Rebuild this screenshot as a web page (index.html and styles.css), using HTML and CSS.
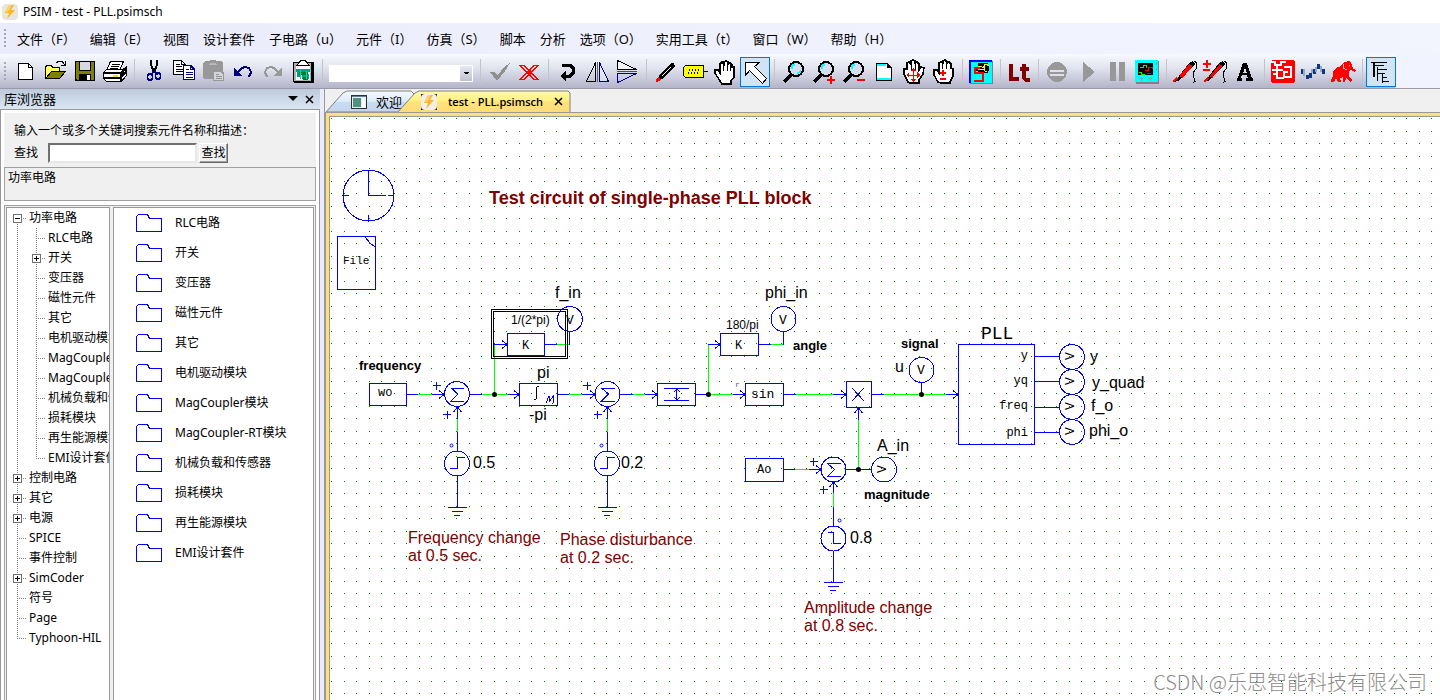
FILE: index.html
```html
<!DOCTYPE html>
<html lang="zh-CN">
<head>
<meta charset="utf-8">
<title>PSIM - test - PLL.psimsch</title>
<link rel="stylesheet" href="styles.css">
</head>
<body>
<div class="app">
  <header class="titlebar">
    <svg class="app-icon" viewBox="0 0 16 16" width="16" height="16" aria-hidden="true"><rect width="16" height="16" rx="4" fill="#e9e6e2"/><path d="M7 1h5L9 6h4L5 15l2-6H3z" fill="#f9b62c"/><path d="M7 1h3L6 8H3z" fill="#ffd36b"/></svg>
    <span>PSIM - test - PLL.psimsch</span>
  </header>

  <nav class="menubar">
    <span class="grip"></span>
    <button>文件（F）</button><button>编辑（E）</button><button>视图</button><button>设计套件</button><button>子电路（u）</button><button>元件（I）</button><button>仿真（S）</button><button>脚本</button><button>分析</button><button>选项（O）</button><button>实用工具（t）</button><button>窗口（W）</button><button>帮助（H）</button>
  </nav>

  <div class="toolrow">
  <div class="toolbar">
    <span class="grip"></span>
    <button class="tool" aria-label="New"><svg viewBox="0 0 30 30"><path d="M8.500 6.500h10l4 4v12h-14z" fill="#fff" stroke="#000"/><path d="M18.500 6.500v4h4" fill="none" stroke="#000"/></svg></button>
    <button class="tool" aria-label="Open"><svg viewBox="0 0 30 30"><path d="M5.500 21.500v-12l2-1h4l1 2h7v4h-8z" fill="#ffff60" stroke="#000"/><path d="M5.500 21.500l6-7h14l-6 7z" fill="#808000" stroke="#000"/><path d="M16 6l3-2h3l2 3v2m-3-1h4v-4" fill="none" stroke="#000"/></svg></button>
    <button class="tool" aria-label="Save"><svg viewBox="0 0 30 30"><rect x="5" y="4" width="20" height="20" fill="#000"/><path d="M6 5h18v18H7l-1-1z" fill="#808000"/><rect x="9" y="5" width="12" height="9" fill="#000"/><rect x="10" y="5" width="10" height="8" fill="#d8d8e4"/><rect x="9" y="17" width="12" height="7" fill="#000"/><rect x="17" y="18" width="3" height="5" fill="#fff"/></svg></button>
    <button class="tool" aria-label="Print"><svg viewBox="0 0 30 30"><path d="M10.500 4.500h13l-4 9h-13z" fill="#fff" stroke="#000"/><path d="M12 7h8M11 9h8M10 11h8" stroke="#000"/><path d="M3.500 15.500l3-3h17l3-3v9l-5 6h-15l-3-3z" fill="#fff" stroke="#000"/><path d="M4 16h17l4-5M4 21h18M21 16v8M23 14l3-2v3l-3 3z" stroke="#000" stroke-width="2" fill="none"/><path d="M13 19h5" stroke="#ffe000" stroke-width="2"/></svg></button>
    <i class="sep"></i>
    <button class="tool" aria-label="Cut"><svg viewBox="0 0 30 30"><path d="M13 3v5l3 7M19 3v5l-3 7" stroke="#000" stroke-width="2" fill="none"/><path d="M16 14l-3 4M16 14l3 4" stroke="#000080" stroke-width="2"/><ellipse cx="12" cy="20" rx="2.500" ry="3.500" fill="none" stroke="#000080" stroke-width="1.500"/><ellipse cx="20" cy="19" rx="2.500" ry="3.500" fill="none" stroke="#000080" stroke-width="1.500"/></svg></button>
    <button class="tool" aria-label="Copy"><svg viewBox="0 0 30 30"><path d="M5.500 3.500h8l4 4v10h-12z" fill="#fff" stroke="#000"/><path d="M13.500 3.500v4h4M8 7h4M8 9h6M8 12h7M8 14h7" fill="none" stroke="#000"/><path d="M15.500 8.500h7l4 4v10h-11z" fill="#fff" stroke="#000080" stroke-width="1.500"/><path d="M22.500 8.500v4h4M18 12h3M18 15h7M18 17h7M18 20h7" fill="none" stroke="#000080"/></svg></button>
    <button class="tool" aria-label="Paste"><svg viewBox="0 0 30 30"><path d="M5 6l2-2h4l2-1h4l2 1h4l2 2v9h1v9H15v-2H6l-1-2z" fill="#989898"/><path d="M10 8h9l-1-2h-6z" fill="#b8b8c0"/><path d="M16 15h6l3 3v5h-9z" fill="#d4d4dc"/><path d="M18 17h3M18 19h6M18 21h6" stroke="#909090"/></svg></button>
    <button class="tool" aria-label="Undo"><svg viewBox="0 0 30 30"><path d="M6 10v9h8z" fill="#000080"/><path d="M10 15l4-4 3-1 4 1 2 4-1 3-2 2" fill="none" stroke="#000080" stroke-width="2"/></svg></button>
    <button class="tool" aria-label="Redo"><svg viewBox="0 0 30 30"><path d="M24 10v9h-8z" fill="#989898"/><path d="M20 15l-4-4-3-1-4 1-2 4 1 3 2 2" fill="none" stroke="#989898" stroke-width="2"/></svg></button>
    <button class="tool" aria-label="Copy image"><svg viewBox="0 0 30 30"><rect x="6" y="5" width="20" height="21" fill="#000"/><rect x="5.500" y="5.500" width="18" height="19" fill="#b0b0b0" stroke="#000"/><rect x="8" y="9" width="14" height="14" fill="#fff"/><path d="M9 8l2-2 2-3h4l2 3 2 2z" fill="#fff" stroke="#000"/><path d="M8 12h14v3H8zM9 15h3v5H9zM14 17h7v5h-7z" fill="#00a088"/><path d="M11 15h9v3h-9zM15 20h5v3h-5z" fill="#008020"/><path d="M12 13v9M18 14v8" stroke="#00d8d8"/></svg></button>
    <i class="sep"></i>
    <select class="combo" aria-label="Element"><option></option></select>
    <i class="sep"></i>
    <button class="tool" aria-label="Apply"><svg viewBox="0 0 30 30"><path d="M6 15l4 0 4 3 6-8 6-4-5 8-7 9h-2z" fill="#909090"/></svg></button>
    <button class="tool" aria-label="Cancel"><svg viewBox="0 0 30 30"><path d="M6 8.500h4l14 14h-4zM20 8.500h4l-14 14H6z" fill="none" stroke="#f00"/><path d="M13 14l2-2 2 2 1 2-2 2h-2l-2-2z" fill="#f00"/></svg></button>
    <i class="sep"></i>
    <button class="tool" aria-label="Rotate"><svg viewBox="0 0 30 30"><path d="M10 9l4-1h4l3 3v5l-3 3h-5" fill="none" stroke="#000" stroke-width="3"/><path d="M8 19l6-6v11z" fill="#000"/></svg></button>
    <button class="tool" aria-label="Flip horizontally"><svg viewBox="0 0 30 30"><path d="M13.500 5.500v19h-9z" fill="none" stroke="#000"/><path d="M17.500 5.500v19h9z" fill="#fff" fill-opacity=".4" stroke="#000080"/><path d="M15.500 5v20" stroke="#606060"/></svg></button>
    <button class="tool" aria-label="Flip vertically"><svg viewBox="0 0 30 30"><path d="M5.500 3.500v9h19z" fill="#fff" fill-opacity=".6" stroke="#000"/><path d="M5.500 25.500v-9h19z" fill="none" stroke="#000080"/><path d="M5 14.500h20" stroke="#505050"/></svg></button>
    <i class="sep"></i>
    <button class="tool" aria-label="Wire"><svg viewBox="0 0 30 30"><path d="M9 19L21 6l3 0 1 3-13 13-4 1z" fill="#000"/><path d="M12 19l9-9" stroke="#fff"/><path d="M6 25v-3l2-2 3 3-2 1z" fill="#f00"/></svg></button>
    <button class="tool" aria-label="Label"><svg viewBox="0 0 30 30"><path d="M5.500 8.500h18v12h-18l-2-2v-8z" fill="#ff0" stroke="#000"/><path d="M24 14.500h4" stroke="#000"/><path d="M9 13h1m2 0h1m2 0h1m2 0h1M8 16h1m2 0h1m2 0h1m2 0h1" stroke="#000" stroke-width="2"/></svg></button>
    <button class="tool" aria-label="Pan"><svg viewBox="0 0 30 30"><path d="M10 24l-5-8v-3h3l2 3V7l2-2 2 2V5l2-1 2 1v2l2-1 2 2v2l2 0 0 3v7l-3 4v3h-9z" fill="#fff" stroke="#000" stroke-width="1.500"/><path d="M13.500 7v7M17.500 6v8M20.500 8v6" stroke="#000"/></svg></button>
    <button class="tool selected" aria-label="Select" aria-pressed="true"><svg viewBox="0 0 30 30"><path d="M5.500 5.500h14l-5 4 12 12-4 5-13-13-4 5z" fill="#fff" stroke="#000"/></svg></button>
    <i class="sep"></i>
    <button class="tool" aria-label="Zoom"><svg viewBox="0 0 30 30"><path d="M6 25l9-9" stroke="#000" stroke-width="4"/><circle cx="18" cy="12" r="7" fill="#d8dcec" stroke="#000" stroke-width="2"/><path d="M14 12v-3l3-2M19 17l4-3" stroke="#0ff" stroke-width="2" fill="none"/></svg></button>
    <button class="tool" aria-label="Zoom in"><svg viewBox="0 0 30 30"><path d="M6 25l9-9" stroke="#000" stroke-width="4"/><circle cx="18" cy="12" r="7" fill="#d8dcec" stroke="#000" stroke-width="2"/><path d="M14 12v-3l3-2" stroke="#0ff" stroke-width="2" fill="none"/><path d="M19 23h8M23 19v8" stroke="#f00" stroke-width="2"/></svg></button>
    <button class="tool" aria-label="Zoom out"><svg viewBox="0 0 30 30"><path d="M6 25l9-9" stroke="#000" stroke-width="4"/><circle cx="18" cy="12" r="7" fill="#d8dcec" stroke="#000" stroke-width="2"/><path d="M14 12v-3l3-2" stroke="#0ff" stroke-width="2" fill="none"/><path d="M19 23h8" stroke="#f00" stroke-width="2"/></svg></button>
    <button class="tool" aria-label="Fit page"><svg viewBox="0 0 30 30"><path d="M8.500 6.500h11l4 4v13h-15z" fill="#fff" stroke="#000"/><path d="M19 6v5h5z" fill="#000"/><path d="M9 8h9M9 22h14" stroke="#0ff" stroke-width="2"/></svg></button>
    <button class="tool" aria-label="Pan view"><svg viewBox="0 0 30 30"><path d="M10 25l-4-8v-5h3V6l2-1 2 2V4l2-1 2 1v2l2-1 2 2v6l2-3 3 1-1 6-4 6v3h-9z" fill="#fff" stroke="#000" stroke-width="1.500"/><path d="M13.500 7v6M17.500 6v7" stroke="#000"/><path d="M9 18h12M15 12v12" stroke="#f00"/><path d="M12 14l3-3 3 3zM12 22l3 3 3-3zM11 15l-3 3 3 3zM19 15l3 3-3 3z" fill="#f00"/></svg></button>
    <button class="tool" aria-label="Hand zoom"><svg viewBox="0 0 30 30"><path d="M10 25l-4-7v-5h3l2 3V6l2-1 2 1V4l2-1 2 2v1l2-1 2 2v4l2 1v7l-3 6v1h-9z" fill="#fff" stroke="#000" stroke-width="1.500"/><path d="M14.500 6v6M18.500 6v6" stroke="#000"/><path d="M12 16h6M15 13v6M12 22h6" stroke="#f00" stroke-width="2"/></svg></button>
    <i class="sep"></i>
    <button class="tool" aria-label="Schematic"><svg viewBox="0 0 30 30"><rect x="4" y="4" width="23" height="23" fill="#808080"/><rect x="3" y="3" width="23" height="23" fill="#0ff"/><path d="M4 26V4h22" stroke="#00f" stroke-width="2" fill="none"/><path d="M12 6h10v3h1v5h-1v2H12v-2h-2v-2h2z" fill="#000"/><path d="M12 9h3l2 2 3-4 3 2M12 13l4-1 5 3M18 7v7" stroke="#ff0" fill="none"/><path d="M14 11H9v5h8v8H8" stroke="#f00" stroke-width="2" fill="none"/></svg></button>
    <i class="sep"></i>
    <button class="tool" aria-label="Lt"><svg viewBox="0 0 30 30"><path d="M7 7v15h8M20 7v14l2 2h4M16 12h9" fill="none" stroke="#800000" stroke-width="3.500"/></svg></button>
    <i class="sep"></i>
    <button class="tool" aria-label="Stop"><svg viewBox="0 0 30 30"><circle cx="15" cy="15" r="10" fill="#989898"/><path d="M8 14h14M8 18h14" stroke="#e0e0ec" stroke-width="1.500"/></svg></button>
    <button class="tool" aria-label="Run"><svg viewBox="0 0 30 30"><path d="M11 5l12 10-12 10z" fill="#989898"/></svg></button>
    <button class="tool" aria-label="Pause"><svg viewBox="0 0 30 30"><path d="M8 5h6v19H8zM17 5h6v19h-6z" fill="#989898"/></svg></button>
    <button class="tool" aria-label="Scope"><svg viewBox="0 0 30 30"><rect x="4" y="4" width="23" height="23" fill="#808080"/><rect x="3" y="3" width="23" height="22" fill="#0ff"/><rect x="6" y="6" width="15" height="12" fill="#000"/><path d="M8 10h3v-2h3v3M7 15h2v2h4" stroke="#0f0" fill="none"/><path d="M13 13h3v-3h4v2M15 16h4" stroke="#f00" fill="none"/><path d="M7 21h4M9 21v3M16 21h4M18 21v3M24 5v3M24 11v2" stroke="#60b0b0"/></svg></button>
    <i class="sep"></i>
    <button class="tool" aria-label="Probe"><svg viewBox="0 0 30 30"><path d="M6 23L19 6l4-2 2 3-15 16-5 2z" fill="#000"/><path d="M11 20L21 8" stroke="#f00" stroke-width="4"/><path d="M3 25l4-4" stroke="#f00" stroke-width="2"/><path d="M24 4l3 2-1 6-3 4v4l2 2-1 3 2-1" fill="none" stroke="#000"/></svg></button>
    <button class="tool" aria-label="Differential probe"><svg viewBox="0 0 30 30"><path d="M6 23L19 6l4-2 2 3-15 16-5 2z" fill="#000"/><path d="M11 20L21 8" stroke="#f00" stroke-width="3"/><path d="M4 25l4-4M3 7h8M7 3v8M3 13h7" stroke="#f00" stroke-width="2"/><path d="M24 4l3 2-1 6-3 4v4l2 2-1 3 2-1" fill="none" stroke="#000"/></svg></button>
    <button class="tool" aria-label="Text"><svg viewBox="0 0 30 30"><path fill-rule="evenodd" d="M13 6h4l5 15h1v3h-7v-3h2l-1-3h-5l-1 3h1v3H7v-3h1zM15 11l-2 5h4z" fill="#000"/></svg></button>
    <i class="sep"></i>
    <button class="tool" aria-label="Device"><svg viewBox="0 0 30 30"><rect x="3" y="3" width="24" height="23" rx="3" fill="#f00"/><path d="M3 5h4v3h6V5h5M4 13h11M9 9v12h7M5 17h4" fill="none" stroke="#fff" stroke-width="2"/><path d="M16 9.500h7v10h-7v-5h4" fill="none" stroke="#fff" stroke-width="2"/></svg></button>
    <button class="tool" aria-label="Waveform"><svg viewBox="0 0 30 30"><path d="M3 12h3v5H3zM8 18h3v4H8zM11 16h3v5h-3zM15 12h3v5h-3zM19 7h3v5h-3zM24 12h3v5h-3z" fill="#103878"/><path d="M6 12v7M14 12v4M18 10v5M23 9v6" stroke="#90a8c8" stroke-width="2"/></svg></button>
    <button class="tool" aria-label="SimCoder"><svg viewBox="0 0 30 30"><path d="M3 23l2-4v-4l3-4 5-2 3-4 6-1 2 4 1 4 3 1-1 2-4-2-2 1v5l3 4-2 2-4-4-1 4-2 0v-5l-3 1 1 4-3 0-2-4-2 4-3 0z" fill="#f00"/><path d="M15 7v4l4 2M21 8h1" stroke="#ffc0c0" fill="none"/></svg></button>
    <i class="sep"></i>
    <button class="tool selected" aria-label="Library browser" aria-pressed="true"><svg viewBox="0 0 30 30"><path d="M5 5.500h16M7 5v15M8 8.500h10M11 10v14M11 12.500h10M12 16.500h7M16 17v9M16 20.500h5M17 24.500h6" stroke="#000" fill="none"/><path d="M8 5v15" stroke="#000"/></svg></button>
  </div>
  </div>

  <div class="workspace">
    <aside class="library">
      <div class="lib-head"><span>库浏览器</span>
        <button aria-label="Menu"><svg width="10" height="6" viewBox="0 0 10 6"><path d="M0 0h10L5 5z"/></svg></button>
        <button aria-label="Close"><svg width="9" height="9" viewBox="0 0 9 9"><path d="M1 1l7 7M8 1L1 8" stroke="#000" stroke-width="1.500"/></svg></button>
      </div>
      <div class="lib-body">
        <form class="search">
          <label for="q">输入一个或多个关键词搜索元件名称和描述：</label>
          <div class="search-row"><span>查找</span><input id="q" type="text"><button type="button">查找</button></div>
        </form>
        <div class="path">功率电路</div>
        <div class="panes">
          <div class="pane tree-pane">
            <ul class="tree">
              <li><div class="row"><button class="toggle" aria-label="Collapse"></button>功率电路</div>
                <ul>
                  <li><div class="row">RLC电路</div></li>
                  <li><div class="row"><button class="toggle plus" aria-label="Expand"></button>开关</div></li>
                  <li><div class="row">变压器</div></li>
                  <li><div class="row">磁性元件</div></li>
                  <li><div class="row">其它</div></li>
                  <li><div class="row">电机驱动模块</div></li>
                  <li><div class="row">MagCoupler模块</div></li>
                  <li><div class="row">MagCoupler-RT模块</div></li>
                  <li><div class="row">机械负载和传感器</div></li>
                  <li><div class="row">损耗模块</div></li>
                  <li><div class="row">再生能源模块</div></li>
                  <li><div class="row">EMI设计套件</div></li>
                </ul>
              </li>
              <li><div class="row"><button class="toggle plus" aria-label="Expand"></button>控制电路</div></li>
              <li><div class="row"><button class="toggle plus" aria-label="Expand"></button>其它</div></li>
              <li><div class="row"><button class="toggle plus" aria-label="Expand"></button>电源</div></li>
              <li><div class="row">SPICE</div></li>
              <li><div class="row">事件控制</div></li>
              <li><div class="row"><button class="toggle plus" aria-label="Expand"></button>SimCoder</div></li>
              <li><div class="row">符号</div></li>
              <li><div class="row">Page</div></li>
              <li><div class="row">Typhoon-HIL</div></li>
            </ul>
          </div>
          <div class="pane list-pane">
            <svg width="0" height="0" class="defs"><symbol id="folder" viewBox="0 0 27 20"><path d="M1.500 18.500V3.500l2-2h9l2 4h11.500v13z" fill="#fff" stroke="#00f"/></symbol></svg>
            <ul class="list">
              <li><svg><use href="#folder"/></svg>RLC电路</li>
              <li><svg><use href="#folder"/></svg>开关</li>
              <li><svg><use href="#folder"/></svg>变压器</li>
              <li><svg><use href="#folder"/></svg>磁性元件</li>
              <li><svg><use href="#folder"/></svg>其它</li>
              <li><svg><use href="#folder"/></svg>电机驱动模块</li>
              <li><svg><use href="#folder"/></svg>MagCoupler模块</li>
              <li><svg><use href="#folder"/></svg>MagCoupler-RT模块</li>
              <li><svg><use href="#folder"/></svg>机械负载和传感器</li>
              <li><svg><use href="#folder"/></svg>损耗模块</li>
              <li><svg><use href="#folder"/></svg>再生能源模块</li>
              <li><svg><use href="#folder"/></svg>EMI设计套件</li>
            </ul>
          </div>
        </div>
      </div>
    </aside>

    <main class="document">
      <div class="tabs">
        <button class="tab">
          <svg class="tab-shape" width="100" height="23" viewBox="0 0 100 23"><defs><linearGradient id="tg" x2="0" y2="1"><stop offset="0" stop-color="#f4fbff"/><stop offset=".5" stop-color="#dcebfa"/><stop offset=".5" stop-color="#c8dcf4"/><stop offset="1" stop-color="#c4d4f0"/></linearGradient></defs><path d="M1 23L18 4l4-2h64l3 3v18z" fill="url(#tg)" stroke="#808080"/></svg>
          <svg class="tab-icon" width="16" height="14" viewBox="0 0 16 14"><rect x=".5" y=".5" width="15" height="13" fill="#e8f0f0" stroke="#303030"/><rect x="2" y="3" width="8" height="9" fill="#4f9080"/><rect x="11" y="3" width="3" height="9" fill="#fff"/><path d="M1 1.500h14" stroke="#6080a0"/></svg>
          <span>欢迎</span>
        </button>
        <button class="tab active">
          <svg class="tab-shape" width="174" height="23" viewBox="0 0 174 23"><defs><linearGradient id="ta" x2="0" y2="1"><stop offset="0" stop-color="#fff8b0"/><stop offset=".45" stop-color="#fff07c"/><stop offset=".5" stop-color="#ffe27c"/><stop offset="1" stop-color="#ffdc78"/></linearGradient></defs><path d="M0 24L18 4l4-2h149l2 2v20z" fill="url(#ta)" stroke="#808080"/></svg>
          <svg class="tab-icon" viewBox="0 0 16 16" width="16" height="16"><rect width="16" height="16" fill="#202020"/><rect width="16" height="16" rx="4" fill="#f4eee4"/><path d="M7 1h5L9 6h4L5 15l2-6H3z" fill="#f9b62c"/><path d="M7 1h3L6 8H3z" fill="#ffd36b"/></svg>
          <b>test - PLL.psimsch</b>
          <svg class="tab-close" width="9" height="9" viewBox="0 0 9 9"><path d="M1 1l7 7M8 1L1 8" stroke="#000" stroke-width="1.500"/></svg>
        </button>
      </div>
      <div class="canvas">
        <svg class="sheet" width="100%" height="100%">
          <defs>
            <pattern id="grid" width="25" height="25" patternUnits="userSpaceOnUse"><path d="M1 1h1v1h-1zM14 1h1v1h-1zM1 14h1v1h-1zM14 14h1v1h-1z" fill="#008000"/></pattern>
            <g id="sum"><circle r="12.500"/><path d="M7-6H-6L1 0L-6 7H7"/></g>
            <g id="plus"><path d="M-4 0h8M0-4v8"/></g>
            <g id="ar"><path d="M-5-4L0 0L-5 4"/></g>
            <g id="au"><path d="M-4 5L0 0L4 5"/></g>
            <g id="gnd"><path d="M-9 0h19M-5 4h11M-3 8h6"/></g>
          </defs>
          <rect width="100%" height="100%" fill="url(#grid)"/>
          <g transform="translate(-330 -117)">
            <g class="wire live"><path d="M418 394.500h14M482 394.500h26M494.500 394V344M457.500 419v13M557 344.500h12M569 394.500h13M607.500 419v13M633 394.500h12M708.500 394V344M708 394.500h25M771 344.500h12M796 394.500h37M858.500 420v49M795 469.500h14M833.500 493v14M884 394.500h62"/></g>
            <g class="wire">
              <circle cx="368.500" cy="195.500" r="25.500"/><path d="M368.500 170v25.500H386M343 195.500h6M388 195.500h6M368.500 215v6"/>
              <path d="M337.500 236.500h38v53h-38zM365 237l5 6 5 4"/>
              <path d="M369.500 383.500h37v22h-37zM407 394.500h11M432 394.500h12M470 394.500h12M508 394.500h11M519.500 383.500h38v22h-38z"/>
              <path d="M494 344.500h13M507.500 333.500h37v22h-37zM545 344.500h12M569.500 345v-13"/>
              <path d="M546 403l3-7v6l5-7-1 8 1-1"/>
              <path d="M557 394.500h12M582 394.500h13M620 394.500h13M645 394.500h12M657.500 383.500h38v22h-38zM664 388.500h25M664 400.500h25M676.500 389v11M674 392l3-3 3 3M674 397l3 3 3-3"/>
              <path d="M696 394.500h12M708 344.500h12M720.500 333.500h38v22h-38zM759 344.500h12M783.500 345v-13M733 394.500h12M745.500 383.500h38v22h-38zM784 394.500h12M833 394.500h13"/>
              <path d="M846.500 381.500h25v26h-25zM852 388l12 13M864 388l-12 13M858.500 407v13M872 394.500h12M946 394.500h12M921.500 383v11"/>
              <path d="M745.500 458.500h38v23h-38zM784 469.500h11M809 469.500h12M846 469.500h25"/>
              <path d="M958.500 344.500h76v100h-76zM1035 356.500h25M1035 381.500h25M1035 407.500h25M1035 432.500h25"/>
              <path d="M457.500 407v12M457.500 432v19M457.500 476v31M607.500 407v12M607.500 432v19M607.500 476v31M833.500 482v11M833.500 507v19M833.500 551v31"/>
              <path d="M450 468.500h7.500v-11h7M600 468.500h7.500v-11h7M828 532.500h5.500v11h7"/>
              <circle cx="457" cy="463.500" r="12.500"/><circle cx="607" cy="463.500" r="12.500"/><circle cx="833.500" cy="538.500" r="12.500"/>
              <g class="marks"><circle cx="451.500" cy="445.500" r="1.500"/><circle cx="601.500" cy="445.500" r="1.500"/><circle cx="839.500" cy="520.500" r="1.500"/></g>
              <circle cx="570" cy="319" r="12.500"/><circle cx="783.500" cy="319" r="12.500"/><circle cx="921.500" cy="370" r="12.500"/><circle cx="884" cy="469.500" r="12.500"/>
              <circle cx="1072" cy="357" r="12.500"/><circle cx="1072" cy="382" r="12.500"/><circle cx="1072" cy="407" r="12.500"/><circle cx="1072" cy="432" r="12.500"/>
              <use href="#sum" x="457" y="394"/><use href="#sum" x="607.500" y="394"/><use href="#sum" x="833.500" y="469.500"/>
              <use href="#plus" x="436.500" y="385.500"/><use href="#plus" x="447" y="414.500"/><use href="#plus" x="587" y="385.500"/><use href="#plus" x="597.500" y="414.500"/><use href="#plus" x="813.500" y="461.500"/><use href="#plus" x="823.500" y="489.500"/>
              <use href="#ar" x="444" y="394.500"/><use href="#ar" x="519" y="394.500"/><use href="#ar" x="507" y="344.500"/><use href="#ar" x="595" y="394.500"/><use href="#ar" x="657" y="394.500"/><use href="#ar" x="720" y="344.500"/><use href="#ar" x="745" y="394.500"/><use href="#ar" x="846" y="394.500"/><use href="#ar" x="821" y="469.500"/><use href="#ar" x="958" y="394.500"/>
              <use href="#au" x="457.500" y="407"/><use href="#au" x="607.500" y="407"/><use href="#au" x="833.500" y="482"/><use href="#au" x="858.500" y="408"/>
              <use href="#gnd" x="457" y="507.500"/><use href="#gnd" x="607" y="507.500"/><use href="#gnd" x="833" y="582.500"/>
            </g>
            <g class="frame"><path d="M491.500 309.500h76v49h-76zM493.500 311.500h72v45h-72z"/></g>
            <g class="node"><circle cx="494.500" cy="394.500" r="2.500"/><circle cx="708.500" cy="394.500" r="2.500"/><circle cx="858.500" cy="469.500" r="2.500"/><circle cx="921.500" cy="394.500" r="2.500"/></g>
            <path d="M534 400l2-1v-11l2-2 1 1" class="frame"/>
            <g class="t-code">
              <text x="343" y="264" class="c11">File</text><text x="378" y="396">wo</text><text x="522" y="349">K</text><text x="735" y="349">K</text><text x="751" y="398" class="c13">sin</text><text x="757" y="473">Ao</text>
              <text x="735" y="387" class="c8">r</text>
              <text x="566" y="324" class="c13">V</text><text x="779" y="324" class="c13">V</text><text x="917" y="374" class="c13">V</text>
              <text transform="translate(877 473) rotate(-90)" x="0" y="9" class="c13">V</text>
              <text transform="translate(1065 360) rotate(-90)" x="0" y="9" class="c13">V</text><text transform="translate(1065 385) rotate(-90)" x="0" y="9" class="c13">V</text><text transform="translate(1065 410) rotate(-90)" x="0" y="9" class="c13">V</text><text transform="translate(1065 435) rotate(-90)" x="0" y="9" class="c13">V</text>
              <text x="1028" y="359" class="end">y</text><text x="1028" y="384" class="end">yq</text><text x="1028" y="409" class="end">freq</text><text x="1028" y="436" class="end">phi</text>
              <text x="981" y="339" class="c18">PLL</text>
            </g>
            <g class="t-label">
              <text x="555" y="298">f_in</text><text x="765" y="298">phi_in</text><text x="537" y="378">pi</text><text x="529" y="420">-pi</text>
              <text x="473" y="468">0.5</text><text x="621" y="468">0.2</text><text x="850" y="543">0.8</text><text x="895" y="372">u</text><text x="877" y="451">A_in</text>
              <text x="1090" y="362">y</text><text x="1092" y="388">y_quad</text><text x="1091" y="411">f_o</text><text x="1089" y="436">phi_o</text>
              <text x="511" y="324" class="s12">1/(2*pi)</text><text x="726" y="329" class="s12">180/pi</text>
            </g>
            <g class="t-bold"><text x="359" y="370">frequency</text><text x="793" y="350">angle</text><text x="901" y="348">signal</text><text x="864" y="499">magnitude</text></g>
            <g class="t-note">
              <text x="489" y="204" class="heading">Test circuit of single-phase PLL block</text>
              <text x="408" y="543">Frequency change</text><text x="408" y="561">at 0.5 sec.</text>
              <text x="560" y="545">Phase disturbance</text><text x="560" y="563">at 0.2 sec.</text>
              <text x="804" y="613">Amplitude change</text><text x="804" y="631">at 0.8 sec.</text>
            </g>
          </g>
        </svg>
        <div class="watermark">CSDN @乐思智能科技有限公司</div>
      </div>
    </main>
  </div>
</div>
</body>
</html>
```
FILE: styles.css
```css
* { box-sizing: border-box; }
body {
  margin: 0;
  font: 12px/16px "Noto Sans", "Noto Sans CJK SC", sans-serif;
  color: #000;
  overflow: hidden;
}
button {
  font: inherit;
  color: inherit;
  background: none;
  border: 0;
  padding: 0;
}
ul { list-style: none; margin: 0; padding: 0; }

.app { display: flex; flex-direction: column; height: 100vh; background: #ebecfb; }

.titlebar {
  display: flex;
  align-items: center;
  gap: 5px;
  height: 23px;
  padding-left: 2px;
  background: #fff;
}

.menubar {
  display: flex;
  align-items: center;
  gap: 14px;
  height: 31px;
  background: linear-gradient(90deg, #ebecfb, #f2f5fe);
  font-size: 13px;
  white-space: nowrap;
}
.grip {
  flex: none;
  width: 2px;
  height: 20px;
  margin: 0 4px;
  background: repeating-linear-gradient(#a8a8b4 0 2px, transparent 2px 4px);
}
.menubar .grip { margin: 0 -3px 0 4px; }

.toolrow { display: flex; background: #f1f4fe; border-bottom: 1px solid #9a9aa8; }
.toolbar {
  display: flex;
  align-items: center;
  height: 34px;
  padding-top: 2px;
  background: linear-gradient(#f8faff, #e2e4ef 40%, #b4b4ca);
  border-radius: 0 0 2px 0;
}
.tool { width: 30px; height: 30px; flex: none; }
.tool svg { display: block; width: 30px; height: 30px; shape-rendering: crispEdges; }
.selected { background: #d0e4f5; box-shadow: inset 0 0 0 1px #0078d7; }
.sep { flex: none; width: 8px; height: 26px; background: linear-gradient(#c4c4c8, #c4c4c8) 4px 0 / 1px 100% no-repeat; }
.combo {
  appearance: none;
  width: 144px;
  height: 17px;
  margin: 2px 3px 0;
  border: 1px solid #fff;
  border-radius: 0;
  background:
    linear-gradient(45deg, transparent 50%, #000 50%) 134px 6px / 3px 3px no-repeat,
    linear-gradient(-45deg, transparent 50%, #000 50%) 137px 6px / 3px 3px no-repeat,
    linear-gradient(#e8e8f2, #c0c0d0) 100% 0 / 12px 100% no-repeat,
    #fff;
}

.workspace { display: flex; flex: 1; gap: 4px; min-height: 0; }

.library { display: flex; flex-direction: column; width: 320px; flex: none; }
.lib-head {
  display: flex;
  align-items: center;
  gap: 7px;
  height: 20px;
  padding: 0 6px 0 4px;
  background: linear-gradient(#bccadb, #dae6f2);
  font-size: 13px;
}
.lib-head span { flex: 1; }
.lib-head button { display: flex; }
.lib-body {
  display: flex;
  flex-direction: column;
  flex: 1;
  min-height: 0;
  padding: 3px 3px 0;
  border: solid #989898;
  border-width: 1px 1px 0;
  background: #fff;
}
.search { padding: 10px 10px 3px; background: #f0f0f0; }
.search label { display: block; white-space: nowrap; }
.search-row { display: flex; align-items: center; margin-top: 3px; height: 22px; }
.search-row input {
  width: 149px;
  height: 20px;
  margin: 0 2px 0 10px;
  padding: 0 2px;
  font: inherit;
  background: #fff;
  border: 2px solid;
  border-color: #707070 #e8e8e8 #e8e8e8 #707070;
}
.search-row button {
  width: 29px;
  height: 20px;
  border: 1px solid;
  border-color: #fff #696969 #696969 #fff;
  box-shadow: inset -1px -1px #a0a0a0;
}
.path {
  height: 34px;
  padding: 2px 3px;
  border: 1px solid #a0a0a0;
  background: #f0f0f0;
}
.panes {
  display: flex;
  gap: 3px;
  flex: 1;
  min-height: 0;
  margin-top: 4px;
  padding: 1px 1px 0;
  border: solid #a0a0a0;
  border-width: 1px 1px 0;
  background: #f0f0f0;
}
.pane { overflow: hidden; border: solid #989898; border-width: 1px 1px 0; background: #fff; }
.tree-pane { width: 104px; flex: none; }
.list-pane { flex: 1; }

.tree, .tree ul {
  background: repeating-linear-gradient(#808080 0 1px, transparent 1px 2px) 10px 10px / 1px calc(100% - 20px) no-repeat;
}
.tree ul { margin-left: 19px; background-position: 10px 0; background-size: 1px calc(100% - 10px); }
.row {
  position: relative;
  height: 20px;
  padding-left: 22px;
  line-height: 20px;
  white-space: nowrap;
  background: repeating-linear-gradient(90deg, #808080 0 1px, transparent 1px 2px) 10px 10px / 9px 1px no-repeat;
}
.toggle {
  position: absolute;
  left: 6px;
  top: 6px;
  width: 9px;
  height: 9px;
  border: 1px solid #707070;
  background: linear-gradient(#000, #000) center / 5px 1px no-repeat, #fff;
}
.plus {
  background: linear-gradient(#000, #000) center / 5px 1px no-repeat, linear-gradient(#000, #000) center / 1px 5px no-repeat, #fff;
}
.defs { position: absolute; }
.list li { display: flex; align-items: center; gap: 13px; height: 30px; padding-left: 21px; white-space: nowrap; }
.list svg { width: 27px; height: 20px; shape-rendering: crispEdges; }

.document {
  display: flex;
  flex-direction: column;
  flex: 1;
  min-width: 0;
  background: #f0f0f0;
  border-left: 1px solid #989898;
}
.tabs { display: flex; height: 23px; }
.tab {
  position: relative;
  display: flex;
  align-items: center;
  width: 72px;
  padding: 2px 0 0 26px;
  gap: 9px;
  font-size: 13px;
  text-align: left;
}
.tab span { white-space: nowrap; }
.tab > * { position: relative; flex: none; }
.tab > .tab-shape { position: absolute; left: 0; top: 0; }
.tab.active { width: 174px; padding-left: 24px; gap: 11px; font-size: 11px; }
.tab b { font-family: "Open Sans", "Noto Sans", sans-serif; font-weight: 600; }
.canvas {
  position: relative;
  flex: 1;
  min-height: 0;
  overflow: hidden;
  background: #fff;
  border: solid #989898;
  border-width: 1px 0 0 1px;
  outline: 3px solid #ffe07c;
  box-shadow: 0 0 0 4px #989898;
  margin: 4px 0 0 4px;
}
.sheet { display: block; }
.wire { fill: none; stroke: #00f; shape-rendering: crispEdges; }
.live { stroke: #0f0; }
.marks { shape-rendering: auto; }
.frame { fill: none; stroke: #000; shape-rendering: crispEdges; }
.t-code { font: 12px "Liberation Mono", monospace; }
.c8 { font-size: 8px; fill: #606060; }
.c11 { font-size: 11px; }
.c13 { font-size: 13px; }
.c18 { font-size: 18px; }
.end { text-anchor: end; }
.t-label { font: 16px "Liberation Sans", sans-serif; }
.s12 { font-size: 12px; }
.t-bold { font: bold 13px "Liberation Sans", sans-serif; }
.t-note { font: 16px "Liberation Sans", sans-serif; fill: #800000; }
.heading { font-size: 18px; font-weight: bold; }
.watermark {
  position: absolute;
  right: 13px;
  bottom: 4px;
  font: 20px/28px "Noto Sans CJK SC", sans-serif;
  font-weight: 300;
  color: #8c8c8c;
}
```
